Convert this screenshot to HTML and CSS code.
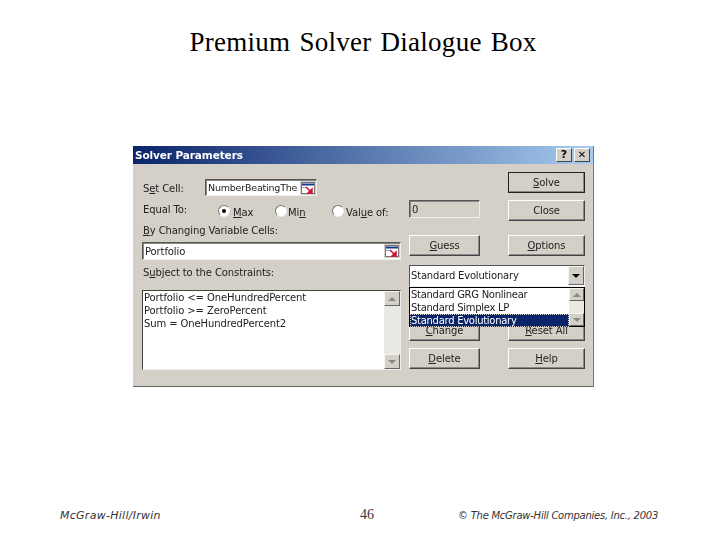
FILE: index.html
```html
<!DOCTYPE html>
<html lang="en">
<head>
    <meta charset="UTF-8">
    <title>Premium Solver Dialogue Box</title>
    <link rel="stylesheet" href="styles.css">
</head>
<body>

    <h1 class="slide-title">Premium Solver Dialogue Box</h1>

    <div class="dialog">
        <div class="titlebar">
            <span class="titlebar-text">Solver Parameters</span>
            <span class="title-btn">?</span>
            <span class="title-btn close-btn">&#10005;</span>
        </div>

        <div class="dialog-body">
            <div class="col-left">
                <div class="row set-cell-row">
                    <label class="field-label"><span>S<u>e</u>t Cell:</span></label>
                    <div class="input set-cell">
                        <span class="input-text">NumberBeatingThe</span>
                        <svg class="ref-icon" viewBox="0 0 16 14">
                            <rect x="1.5" y="1.5" width="13" height="11" fill="#fff" stroke="#777"/>
                            <path d="M2 3.5h12" stroke="#123a8c" stroke-width="2"/>
                            <path d="M2 6.5h4" stroke="#9aa4c8"/>
                            <path d="M6 6l5 5M12 8v4H8z" stroke="#d01030" stroke-width="1.5" fill="#d01030"/>
                        </svg>
                    </div>
                </div>

                <div class="row equal-row">
                    <span class="equal-label">Equal To:</span>
                    <span class="radio checked"></span><span class="radio-label max-label"><u>M</u>ax</span>
                    <span class="radio"></span><span class="radio-label min-label">Mi<u>n</u></span>
                    <span class="radio"></span><span class="radio-label value-label">Val<u>u</u>e of:</span>
                </div>

                <div class="section-label changing-label"><u>B</u>y Changing Variable Cells:</div>
                <div class="input changing">
                    <span class="input-text">Portfolio</span>
                    <svg class="ref-icon" viewBox="0 0 16 14">
                        <rect x="1.5" y="1.5" width="13" height="11" fill="#fff" stroke="#777"/>
                        <path d="M2 3.5h12" stroke="#123a8c" stroke-width="2"/>
                        <path d="M2 6.5h4" stroke="#9aa4c8"/>
                        <path d="M6 6l5 5M12 8v4H8z" stroke="#d01030" stroke-width="1.5" fill="#d01030"/>
                    </svg>
                </div>

                <div class="section-label subject-label">S<u>u</u>bject to the Constraints:</div>
                <div class="listbox">
                    <div class="list-lines">
                        <div>Portfolio &lt;= OneHundredPercent</div>
                        <div>Portfolio &gt;= ZeroPercent</div>
                        <div>Sum = OneHundredPercent2</div>
                    </div>
                    <div class="scrollbar">
                        <span class="scroll-btn"><span class="arrow-up"></span></span>
                        <span class="scroll-track"></span>
                        <span class="scroll-btn"><span class="arrow-down"></span></span>
                    </div>
                </div>
            </div>

            <div class="col-mid">
                <div class="input value-box">0</div>
                <button class="btn guess-btn"><u>G</u>uess</button>
                <div class="combo-wrap">
                    <div class="combo">
                        <span class="combo-text">Standard Evolutionary</span>
                        <span class="combo-btn"><span class="arrow-down dark"></span></span>
                    </div>
                    <div class="dropdown">
                        <div class="drop-list">
                            <div class="drop-item">Standard GRG Nonlinear</div>
                            <div class="drop-item">Standard Simplex LP</div>
                            <div class="drop-item selected">Standard Evolutionary</div>
                        </div>
                        <div class="scrollbar">
                            <span class="scroll-btn"><span class="arrow-up"></span></span>
                            <span class="scroll-track"></span>
                            <span class="scroll-btn"><span class="arrow-down"></span></span>
                        </div>
                    </div>
                </div>
                <button class="btn change-btn"><u>C</u>hange</button>
                <button class="btn delete-btn"><u>D</u>elete</button>
            </div>

            <div class="col-right">
                <button class="btn default-btn"><u>S</u>olve</button>
                <button class="btn close-dialog-btn">Close</button>
                <button class="btn options-btn"><u>O</u>ptions</button>
                <button class="btn reset-btn"><u>R</u>eset All</button>
                <button class="btn help-btn"><u>H</u>elp</button>
            </div>
        </div>
    </div>

    <div class="footer">
        <span class="footer-left">McGraw-Hill/Irwin</span>
        <span class="footer-page">46</span>
        <span class="footer-right">&copy; The McGraw-Hill Companies, Inc., 2003</span>
    </div>

</body>
</html>
```

FILE: styles.css
```css
body {
    margin: 0;
    width: 720px;
    height: 540px;
    background: #fff;
    color: #000;
    display: flex;
    flex-direction: column;
    overflow: hidden;
}

.slide-title {
    margin: 26px 0 0;
    padding-left: 6px;
    height: 32px;
    text-align: center;
    font-family: "Liberation Serif", serif;
    font-size: 27px;
    line-height: 32px;
    font-weight: normal;
    word-spacing: 2px;
    letter-spacing: 0.27px;
}

/* dialog */
.dialog {
    margin: 88px 0 0 133px;
    width: 460px;
    height: 240px;
    background: #d4d0c8;
    font-family: "DejaVu Sans", sans-serif;
    font-size: 10px;
    letter-spacing: -0.1px;
    color: #222;
    filter: blur(0.35px);
    display: flex;
    flex-direction: column;
    border-right: 1px solid #777;
    border-bottom: 1px solid #666;
}

.titlebar {
    height: 18px;
    flex: none;
    background: linear-gradient(to right, #0a246a, #a6caf0);
    display: flex;
    align-items: center;
    gap: 2px;
    padding: 0 3px 0 2px;
}

.titlebar-text {
    flex: 1;
    color: #fff;
    font-weight: bold;
    font-size: 10.5px;
}

.title-btn {
    width: 16px;
    height: 14px;
    background: #d4d0c8;
    border: 1px solid;
    border-color: #fff #444 #444 #fff;
    box-sizing: border-box;
    color: #000;
    font-size: 11px;
    font-weight: bold;
    line-height: 12px;
    text-align: center;
}

.close-btn {
    font-size: 10px;
}

.dialog-body {
    display: flex;
    flex: 1;
    padding-left: 9px;
}

.col-left {
    width: 259px;
    flex: none;
    display: flex;
    flex-direction: column;
}

.col-mid {
    width: 71px;
    margin-left: 8px;
    flex: none;
    display: flex;
    flex-direction: column;
}

.col-right {
    width: 77px;
    margin-left: 28px;
    flex: none;
    display: flex;
    flex-direction: column;
    padding-top: 8px;
}

.row {
    display: flex;
    align-items: center;
}

.set-cell-row {
    margin: 15px 0 0 1px;
}

.field-label {
    width: 62px;
    margin-top: 1px;
}

.input {
    background: #fff;
    border: 1px solid;
    border-color: #555 #eee #eee #555;
    box-shadow: inset 1px 1px 0 #888;
    box-sizing: border-box;
    display: flex;
    align-items: center;
    padding-left: 2px;
    justify-content: space-between;
}

.input-text {
    white-space: nowrap;
    overflow: hidden;
}

.set-cell {
    width: 112px;
    height: 17px;
    font-size: 9.5px;
    letter-spacing: -0.2px;
}

.ref-icon {
    width: 16px;
    height: 14px;
    flex: none;
    background: #d4d0c8;
}

.equal-row {
    margin: 5px 0 0 1px;
    height: 16px;
}

.equal-label {
    width: 75px;
}

.radio {
    width: 12px;
    height: 12px;
    flex: none;
    margin-top: 4px;
    border-radius: 50%;
    background: #fff;
    border: 1px solid;
    border-color: #777 #eee #eee #777;
    box-sizing: border-box;
    position: relative;
}

.radio.checked::after {
    content: "";
    position: absolute;
    left: 3px;
    top: 3px;
    width: 4px;
    height: 4px;
    border-radius: 50%;
    background: #000;
}

.radio-label {
    margin-top: 6px;
}

.max-label {
    width: 42px;
    margin-left: 3px;
}

.min-label {
    width: 44px;
    margin-left: 1px;
}

.value-label {
    margin-left: 2px;
}

.section-label {
    margin-left: 1px;
}

.changing-label {
    margin-top: 8px;
}

.changing {
    width: 259px;
    height: 18px;
    margin-top: 6px;
}

.subject-label {
    margin-top: 7px;
}

.listbox {
    width: 259px;
    height: 80px;
    margin-top: 12px;
    background: #fff;
    border: 1px solid;
    border-color: #444 #eee #eee #444;
    box-sizing: border-box;
    display: flex;
}

.list-lines {
    flex: 1;
    padding: 0 0 0 1px;
    line-height: 13px;
}

.scrollbar {
    width: 16px;
    flex: none;
    display: flex;
    flex-direction: column;
    background: #ebe9e4;
}

.scroll-btn {
    height: 15px;
    flex: none;
    background: #d4d0c8;
    border: 1px solid;
    border-color: #f4f4f4 #666 #666 #f4f4f4;
    box-sizing: border-box;
    display: flex;
    align-items: center;
    justify-content: center;
}

.scroll-track {
    flex: 1;
}

.arrow-up {
    border: 4px solid transparent;
    border-top: 0;
    border-bottom: 4px solid #888;
}

.arrow-down {
    border: 4px solid transparent;
    border-bottom: 0;
    border-top: 4px solid #888;
}

.arrow-down.dark {
    border-top-color: #000;
}

/* buttons */
.btn {
    height: 21px;
    padding: 0;
    flex: none;
    font: inherit;
    letter-spacing: inherit;
    color: inherit;
    background: #d4d0c8;
    border: 1px solid;
    border-color: #fff #444 #444 #fff;
    box-shadow: inset -1px -1px 0 #888;
}

.default-btn {
    outline: 1px solid #222;
    outline-offset: -1px;
}

.close-dialog-btn {
    margin-top: 7px;
}

.options-btn {
    margin-top: 14px;
}

.reset-btn {
    margin-top: 64px;
}

.help-btn {
    margin-top: 7px;
}

.value-box {
    width: 71px;
    height: 18px;
    margin-top: 36px;
    background: #d4d0c8;
}

.guess-btn {
    margin-top: 17px;
}

/* combo sits over the Change button top */
.combo-wrap {
    position: relative;
    width: 176px;
    margin-top: 9px;
    height: 22px;
    z-index: 1;
}

.combo {
    height: 22px;
    background: #fff;
    border: 1px solid;
    border-color: #555 #eee #eee #555;
    box-sizing: border-box;
    display: flex;
    align-items: center;
    padding: 0 0 1px 1px;
    letter-spacing: -0.18px;
}

.combo-text {
    flex: 1;
}

.combo-btn {
    width: 16px;
    height: 19px;
    background: #d4d0c8;
    border: 1px solid;
    border-color: #f4f4f4 #666 #666 #f4f4f4;
    box-sizing: border-box;
    display: flex;
    align-items: center;
    justify-content: center;
}

.dropdown {
    position: absolute;
    left: 0;
    top: 22px;
    width: 176px;
    height: 40px;
    background: #fff;
    border: 1px solid #000;
    box-sizing: border-box;
    display: flex;
    letter-spacing: -0.28px;
}

.drop-list {
    flex: 1;
    line-height: 13px;
}

.drop-item {
    padding-left: 1px;
    height: 13px;
}

.drop-item.selected {
    background: #0a246a;
    color: #fff;
    outline: 1px dotted #d4d0c8;
    outline-offset: -1px;
}

.dropdown .scrollbar {
    width: 15px;
}

.dropdown .scroll-btn {
    height: 13px;
}

.change-btn {
    margin-top: 33px;
}

.delete-btn {
    margin-top: 7px;
}

/* footer */
.footer {
    margin-top: auto;
    padding: 0 62px 17px 60px;
    display: grid;
    grid-template-columns: 300px 98px 1fr;
    align-items: center;
    font-family: "DejaVu Sans", sans-serif;
    font-style: italic;
    font-size: 10px;
    letter-spacing: -0.25px;
    color: #333;
    white-space: nowrap;
}

.footer-left {
    font-size: 11px;
    letter-spacing: 0.27px;
}

.footer-page {
    font-family: "Liberation Serif", serif;
    font-style: normal;
    font-size: 14px;
    letter-spacing: 0;
}

.footer-right {
    text-align: right;
}
```
